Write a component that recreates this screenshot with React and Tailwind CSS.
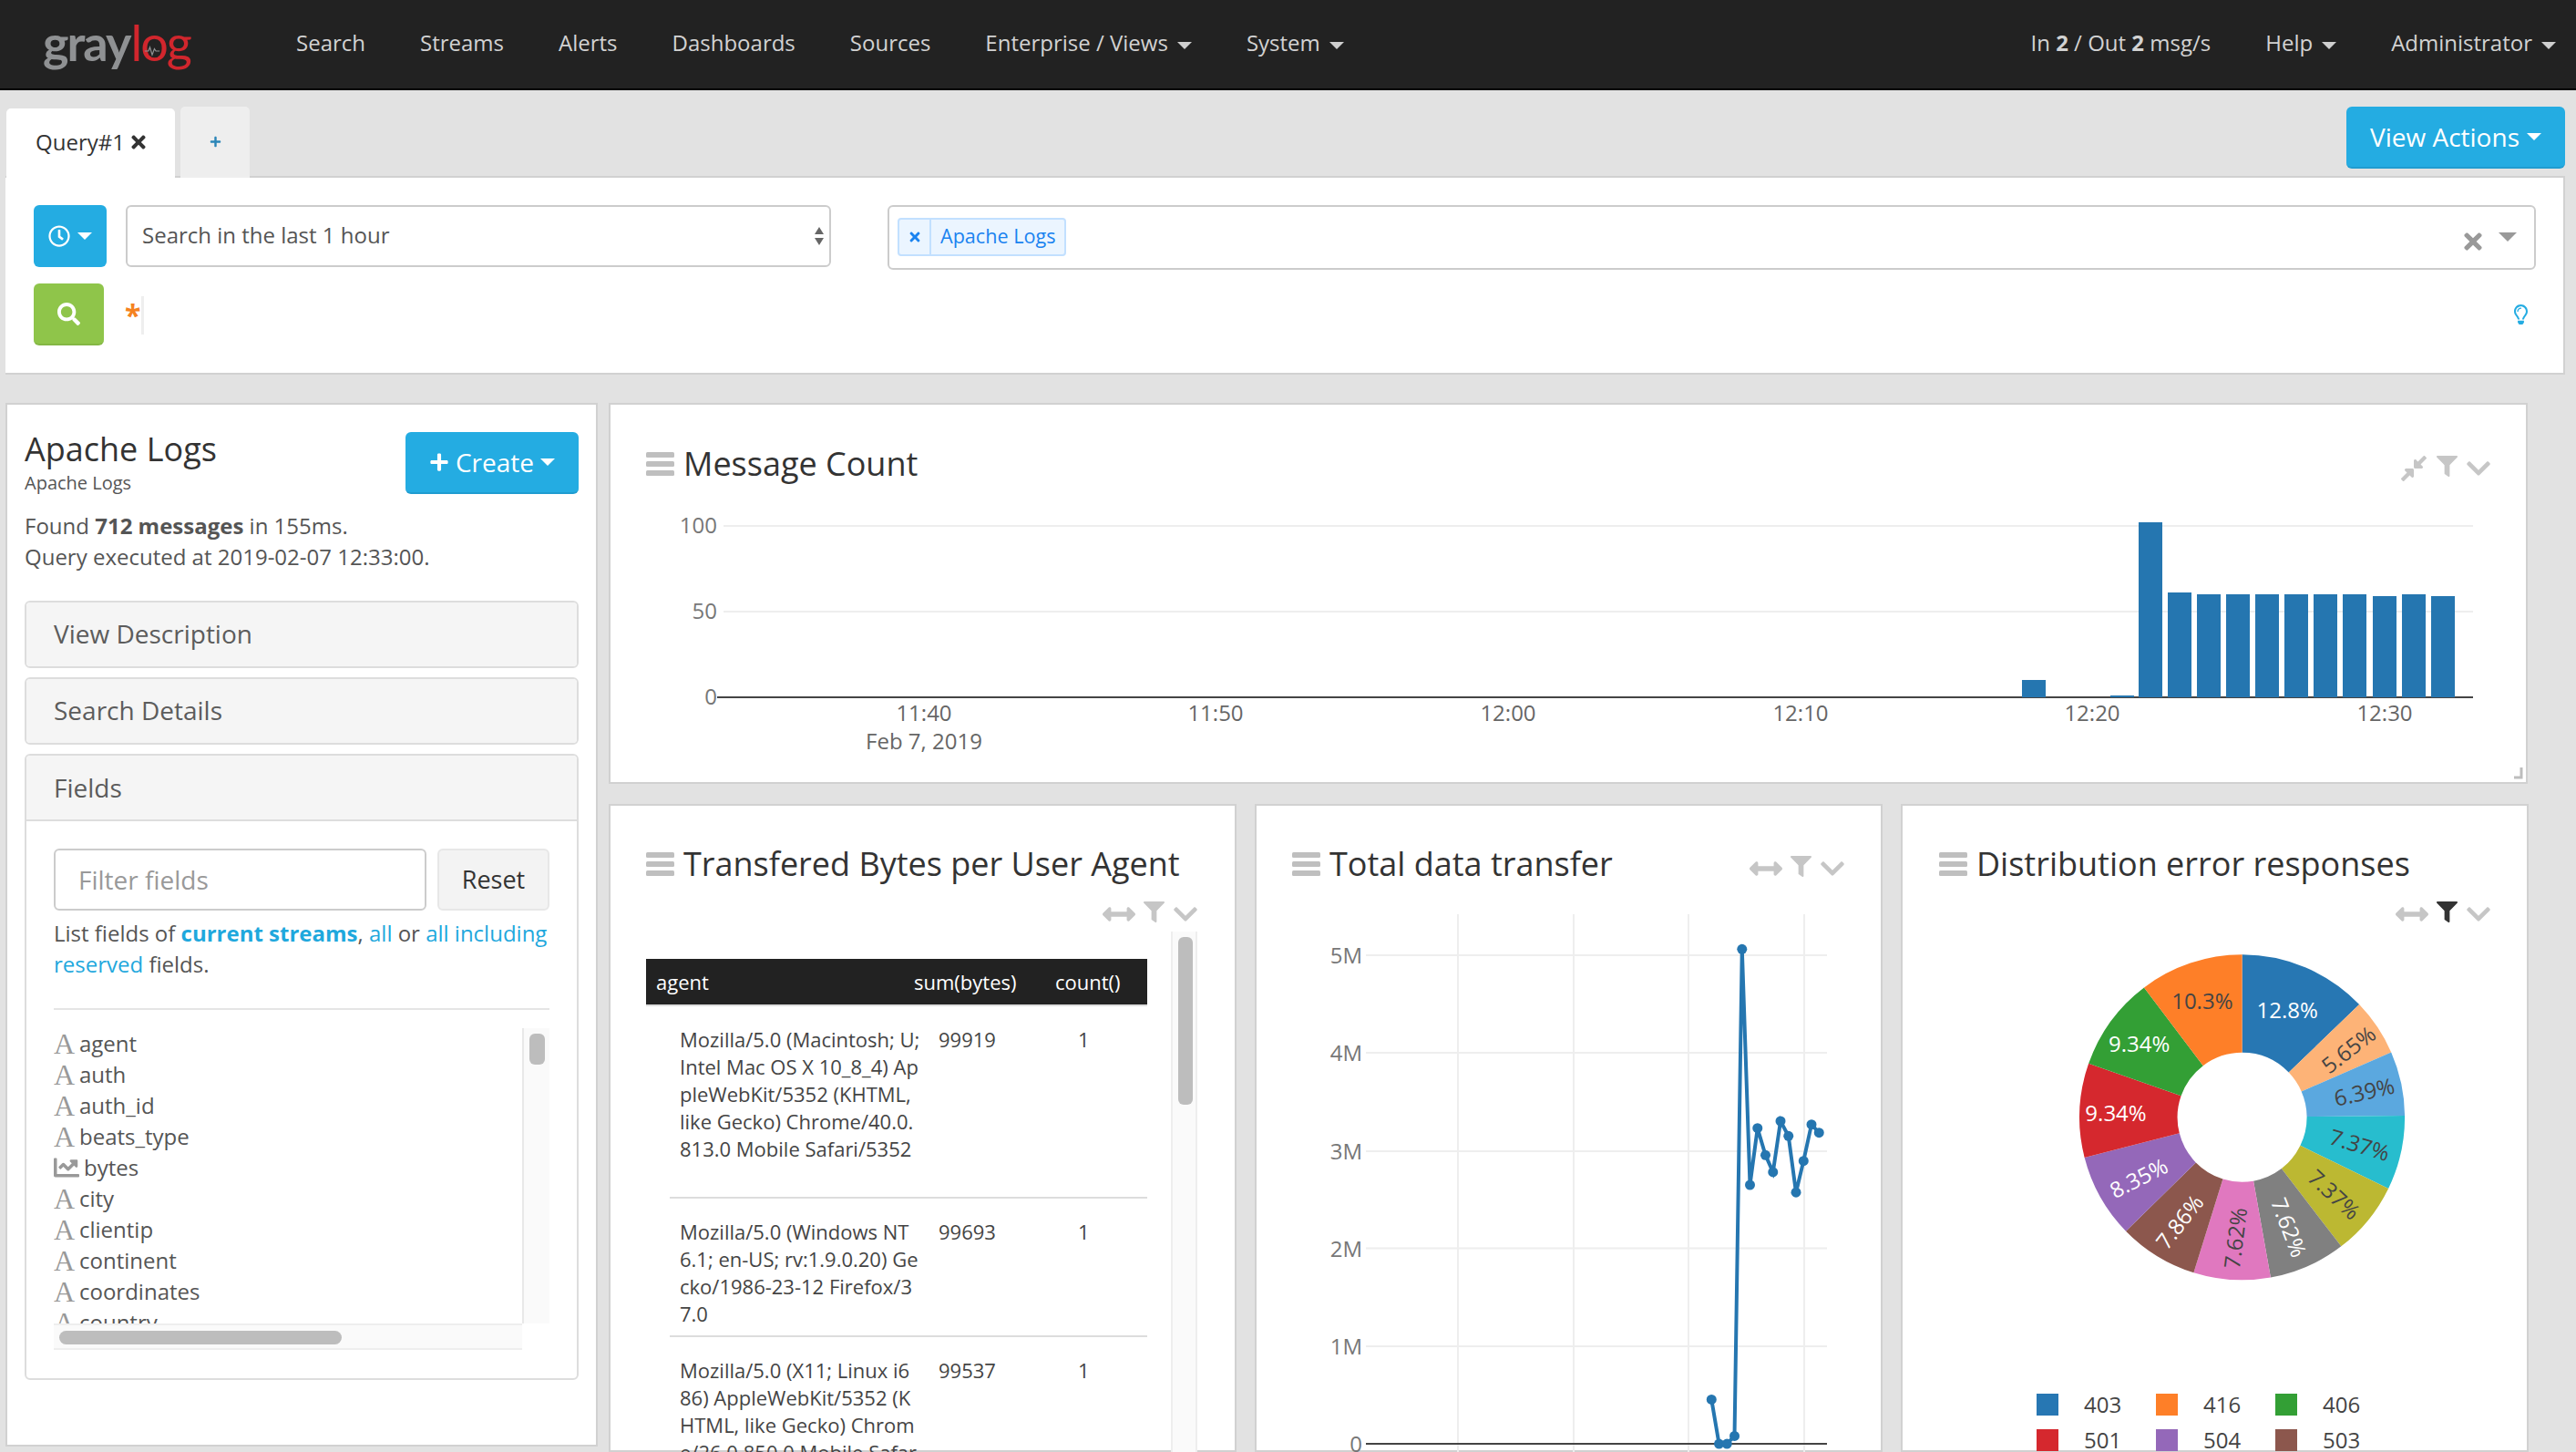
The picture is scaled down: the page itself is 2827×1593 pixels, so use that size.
import React from "react";
import { FaRegClock, FaSearch, FaTimes, FaPlus, FaFilter, FaChevronDown, FaArrowsAltH, FaCompressAlt, FaChartLine, FaRegLightbulb } from "react-icons/fa";

const OS = "font-['Open_Sans',sans-serif]";

function Caret({ color = "border-t-[#cfcfcf]" }) {
  return <span className={`inline-block w-0 h-0 border-x-transparent border-x-[8px] border-t-[8px] ${color}`} />;
}

function NavItem({ children, caret, className = "" }) {
  return (
    <span className={`flex items-center gap-[10px] ${className}`}>
      <span>{children}</span>
      {caret && <span className="flex mt-[5px]"><Caret /></span>}
    </span>
  );
}

function Logo() {
  return (
    <div className="relative flex items-baseline font-['Lato',sans-serif] text-[54px] leading-none tracking-[-2px] blur-[0.5px] w-[164px] ml-[47px] mt-[-3px]">
      <span className="font-bold text-[#8f9193]">gray</span>
      <span className="text-[#d1262d] ml-[1px]">log</span>
      <svg className="absolute left-[111px] top-[30px] w-[18px] h-[12px]" viewBox="0 0 22 14" fill="none" stroke="#8f9193" strokeWidth="1.5">
        <path d="M1 7h5l2-5 3 10 3-8 2 3h5" />
      </svg>
    </div>
  );
}

function Nav() {
  return (
    <nav className="h-[99px] shrink-0 bg-[#222222] border-b-2 border-black flex items-center text-[24px] text-[#d2d2d2]">
      <Logo />
      <div className="flex items-center gap-[60px] ml-[114px] mt-[-3px]">
        <NavItem>Search</NavItem>
        <NavItem>Streams</NavItem>
        <NavItem>Alerts</NavItem>
        <NavItem>Dashboards</NavItem>
        <NavItem>Sources</NavItem>
        <NavItem caret>Enterprise / Views</NavItem>
        <NavItem caret>System</NavItem>
      </div>
      <div className="ml-auto flex items-center mr-[22px] mt-[-3px]">
        <span className="mr-[60px]">In <b>2</b> / Out <b>2</b> msg/s</span>
        <NavItem caret className="mr-[60px]">Help</NavItem>
        <NavItem caret>Administrator</NavItem>
      </div>
    </nav>
  );
}

function QueryBar() {
  return (
    <div className="pl-[6px] pr-[12px]">
      <div className="flex items-end h-[94px] relative z-10">
        <div className="h-[76px] w-[185px] ml-[1px] bg-white rounded-t-[5px] flex items-center justify-center gap-[7px] text-[24px] text-[#333] mb-[-2px] pb-[2px]">
          <span>Query#1</span>
          <FaTimes className="text-[#333] w-[16px] h-[22px]" />
        </div>
        <div className="h-[78px] w-[76px] ml-[6px] bg-[#eeeeee] rounded-t-[5px] flex items-center justify-center mb-[-2px] pb-[2px]">
          <FaPlus className="text-[#2b86b8] w-[13px] h-[13px]" />
        </div>
        <button className="ml-auto mb-[8px] h-[68px] w-[240px] bg-[#24ace2] border-b-2 border-[#1f9cd0] rounded-[6px] text-white text-[28px] flex items-center justify-center gap-[8px]">
          View Actions <Caret color="border-t-white" />
        </button>
      </div>
      <div className="h-[218px] bg-white border-2 border-[#d1d1d1] border-l-0 pl-[31px] pr-[30px] pt-[30px]">
        <div className="flex items-start">
          <button className="w-[80px] h-[68px] bg-[#24ace2] rounded-[6px] flex items-center justify-center gap-[8px] text-white">
            <FaRegClock className="w-[24px] h-[24px]" />
            <Caret color="border-t-white" />
          </button>
          <div className="ml-[21px] w-[774px] h-[68px] border-2 border-[#cccccc] rounded-[6px] flex items-center pl-[16px] pr-[6px] text-[24px] text-[#555]">
            <span className="mt-[-2px]">Search in the last 1 hour</span>
            <span className="ml-auto flex flex-col gap-[4px]">
              <span className="block w-0 h-0 border-x-[5px] border-b-[8px] border-x-transparent border-b-[#666]" />
              <span className="block w-0 h-0 border-x-[5px] border-t-[8px] border-x-transparent border-t-[#666]" />
            </span>
          </div>
          <div className="ml-[62px] flex-1 h-[71px] border-2 border-[#cccccc] rounded-[6px] flex items-center pl-[9px] pr-[19px]">
            <div className="h-[42px] flex items-stretch border-2 border-[#c2e0ff] bg-[#ebf5ff] rounded-[4px] text-[#1a83f0] text-[21.6px] mt-[-2px]">
              <span className="w-[35px] flex items-center justify-center border-r-2 border-[#c2e0ff]"><FaTimes className="w-[12px] h-[16px] text-[#1a83f0]" /></span>
              <span className="pl-[10px] pr-[10px] flex items-center">Apache Logs</span>
            </div>
            <FaTimes className="ml-auto w-[20px] h-[28px] text-[#999] mt-[8px]" />
            <span className="ml-[18px] mt-[-2px] w-0 h-0 border-x-[10px] border-t-[10px] border-x-transparent border-t-[#999]" />
          </div>
        </div>
        <div className="flex items-start mt-[15px]">
          <button className="w-[77px] h-[68px] bg-[#8fc54a] border-b-2 border-[#84b744] rounded-[6px] flex items-center justify-center text-white">
            <FaSearch className="w-[25px] h-[25px]" />
          </button>
          <span className="ml-[23px] mt-[14px] h-[42px] border-r-[3px] border-[#eeeeee] pr-[2px] text-[#f58220] text-[32px] leading-[42px] font-bold w-[21px]">*</span>
          <FaRegLightbulb className="ml-auto mr-[9px] mt-[23px] w-[15px] h-[22px] text-[#24ace2]" />
        </div>
      </div>
    </div>
  );
}

function PanelHead({ children, open }) {
  return (
    <div className={`${open ? "h-[72px] border-b-2 border-[#dddddd]" : "h-[70px] pb-[2px]"} bg-[#f5f5f5] flex items-center pl-[30px] text-[28px] text-[#5c5c5c]`}>
      {children}
    </div>
  );
}

const fields = ["agent", "auth", "auth_id", "beats_type", "bytes", "city", "clientip", "continent", "coordinates", "country"];

function Sidebar() {
  return (
    <aside className="w-[650px] shrink-0 h-[1145px] bg-white border-2 border-[#d1d1d1] pl-[19px] pr-[19px] pt-[18px] text-[#555] text-[24px]">
      <div className="flex justify-between items-start">
        <div>
          <div className="text-[36px] leading-[50px] text-[#333] mt-[6px]">Apache Logs</div>
          <div className="text-[20px] leading-[24px] text-[#555]">Apache Logs</div>
        </div>
        <button className="mt-[12px] w-[190px] h-[68px] bg-[#24ace2] border-b-2 border-[#1f9cd0] rounded-[6px] text-white text-[28px] flex items-center justify-center gap-[7px]">
          <FaPlus className="w-[22px] h-[22px]" /> Create <Caret color="border-t-white" />
        </button>
      </div>
      <div className="mt-[18px] leading-[34px]">
        <div>Found <b>712 messages</b> in 155ms.</div>
        <div>Query executed at 2019-02-07 12:33:00.</div>
      </div>
      <div className="mt-[31px] border-2 border-[#dddddd] rounded-[6px] overflow-hidden"><PanelHead>View Description</PanelHead></div>
      <div className="mt-[10px] border-2 border-[#dddddd] rounded-[6px] overflow-hidden"><PanelHead>Search Details</PanelHead></div>
      <div className="mt-[10px] border-2 border-[#dddddd] rounded-[6px] overflow-hidden h-[687px]">
        <PanelHead open>Fields</PanelHead>
        <div className="pl-[30px] pr-[30px] pt-[30px]">
          <div className="flex gap-[12px]">
            <div className="w-[409px] h-[68px] border-2 border-[#cccccc] rounded-[6px] flex items-center pl-[25px] text-[28px] text-[#999]">Filter fields</div>
            <button className="flex-1 h-[68px] bg-[#f3f3f3] border-2 border-[#e7e7e7] rounded-[6px] text-[27px] text-[#333]">Reset</button>
          </div>
          <p className="mt-[8px] leading-[34px] whitespace-nowrap text-[#555]">
            List fields of <b className="font-bold text-[#1fa8dd]">current streams</b>, <span className="text-[#1fa8dd]">all</span> or <span className="text-[#1fa8dd]">all including</span><br />
            <span className="text-[#1fa8dd]">reserved</span> fields.
          </p>
          <div className="mt-[31px] border-t-2 border-[#e5e5e5]" />
          <div className="mt-[20px] relative h-[353px]">
            <div className="flex h-[324px]">
              <div className="flex-1 overflow-hidden">
                {fields.map((f) => (
                  <div key={f} className="h-[34px] flex items-center">
                    {f === "bytes" ? (
                      <FaChartLine className="w-[28px] h-[28px] my-[-2px] text-[#999] mr-[5px]" />
                    ) : (
                      <span className="font-['Liberation_Serif',serif] text-[#999] text-[32px] leading-none w-[23px] mr-[5px]">A</span>
                    )}
                    <span>{f}</span>
                  </div>
                ))}
              </div>
              <div className="w-[30px] bg-[#fafafa] border-l-2 border-[#e8e8e8] pl-[6px] pt-[6px]">
                <div className="w-[17px] h-[34px] bg-[#bdbdbd] rounded-[6px]" />
              </div>
            </div>
            <div className="w-[514px] h-[29px] bg-[#fafafa] border-y-2 border-[#eeeeee] pl-[6px] pt-[6px]">
              <div className="w-[310px] h-[15px] bg-[#bdbdbd] rounded-[8px]" />
            </div>
          </div>
        </div>
      </div>
    </aside>
  );
}

function Bars() {
  return (
    <svg width="31" height="26" viewBox="0 0 31 26" className="shrink-0">
      <rect x="0" y="0" width="31" height="6" rx="1.5" fill="#bfbfbf" />
      <rect x="0" y="10" width="31" height="6" rx="1.5" fill="#bfbfbf" />
      <rect x="0" y="20" width="31" height="6" rx="1.5" fill="#bfbfbf" />
    </svg>
  );
}

function Controls({ first = "h", filterDark }) {
  return (
    <div className="flex items-center h-[28px] text-[#c6c6c6]">
      {first === "h" ? <FaArrowsAltH className="w-[36px] h-[36px] my-[-4px]" /> : <FaCompressAlt className="w-[32px] h-[32px] my-[-2px]" />}
      <FaFilter className={`w-[23px] h-[23px] ml-[9px] mt-[-6px] ${filterDark ? "text-[#333]" : ""}`} />
      <span className="w-[26px] h-[28px] ml-[10px] flex items-center justify-center">
        <FaChevronDown className="w-[30px] h-[30px] shrink-0" />
      </span>
    </div>
  );
}

function Title({ children }) {
  return (
    <div className="flex items-center gap-[10px]">
      <Bars />
      <h2 className="text-[36px] leading-[50px] font-normal text-[#333] whitespace-nowrap">{children}</h2>
    </div>
  );
}

const barData = [[2219, 746], [2316, 763], [2347, 573], [2379, 650], [2411, 652], [2443, 652], [2475, 652], [2507, 652], [2539, 652], [2571, 652], [2604, 654], [2636, 652], [2668, 654]];

function MessageCount() {
  const xs = [1014, 1334, 1655, 1976, 2296, 2617];
  const labels = ["11:40", "11:50", "12:00", "12:10", "12:20", "12:30"];
  return (
    <section className="h-[418px] w-[2106px] bg-white border-2 border-[#d1d1d1] relative">
      <div className="flex items-center justify-between pl-[39px] pr-[39px] pt-[40px]">
        <Title>Message Count</Title>
        <div className="mt-[10px]"><Controls first="c" /></div>
      </div>
      <svg className="absolute left-[-2px] top-[-2px]" width="2106" height="418" viewBox="668 442 2106 418" fontFamily="'Open Sans',sans-serif" fontSize="24">
        <path d="M794 577H2714M794 671H2714" stroke="#eeeeee" strokeWidth="2" />
        <path d="M787 765H2714" stroke="#444444" strokeWidth="2" />
        {barData.map(([x, y]) => <rect key={x} x={x} y={y} width="26" height={765 - y} fill="#2576b0" />)}
        <g fill="#777777" textAnchor="end">
          <text x="787" y="585">100</text>
          <text x="787" y="679">50</text>
          <text x="787" y="773">0</text>
        </g>
        <g fill="#666666" textAnchor="middle">
          {xs.map((x, i) => <text key={x} x={x} y="791">{labels[i]}</text>)}
          <text x="1014" y="822">Feb 7, 2019</text>
        </g>
        <path d="M2767 842v11h-8" fill="none" stroke="#bdbdbd" strokeWidth="3" />
      </svg>
    </section>
  );
}

const rows = [
  { lines: ["Mozilla/5.0 (Macintosh; U;", "Intel Mac OS X 10_8_4) Ap", "pleWebKit/5352 (KHTML,", "like Gecko) Chrome/40.0.", "813.0 Mobile Safari/5352"], sum: "99919", h: "h-[211px]" },
  { lines: ["Mozilla/5.0 (Windows NT", "6.1; en-US; rv:1.9.0.20) Ge", "cko/1986-23-12 Firefox/3", "7.0"], sum: "99693", h: "h-[152px]" },
  { lines: ["Mozilla/5.0 (X11; Linux i6", "86) AppleWebKit/5352 (K", "HTML, like Gecko) Chrom", "e/26.0.850.0 Mobile Safar"], sum: "99537", h: "h-[152px]" },
];

function BytesTable() {
  return (
    <div className="flex mt-[5px]">
      <div className="w-[550px] pt-[30px]">
        <div className="h-[52px] bg-[#222222] border-b-2 border-[#dddddd] text-white text-[22px] font-medium relative flex items-center">
          <span className="ml-[11px]">agent</span>
          <span className="absolute left-[294px]">sum(bytes)</span>
          <span className="absolute left-[449px]">count()</span>
        </div>
        <div className="ml-[26px] text-[22px] leading-[30px] text-[#444]">
          {rows.map((r, i) => (
            <div key={r.sum} className={`${r.h} flex pt-[21px] ${i < 2 ? "border-b-2 border-[#dddddd]" : ""}`}>
              <div className="w-[295px] pl-[11px] whitespace-nowrap">{r.lines.map((l) => <div key={l}>{l}</div>)}</div>
              <div className="w-[153px]">{r.sum}</div>
              <div>1</div>
            </div>
          ))}
        </div>
      </div>
      <div className="ml-[26px] w-[29px] h-[600px] bg-[#fafafa] border-x-2 border-[#eeeeee] pl-[6px] pt-[6px]">
        <div className="w-[16px] h-[184px] bg-[#bdbdbd] rounded-[6px]" />
      </div>
    </div>
  );
}

const pts = [[1107, 1442], [1125, 1549], [1144, 1549], [1162, 1530], [1180, 355], [1199, 924], [1217, 787], [1236, 852], [1254, 893], [1272, 770], [1291, 806], [1309, 942], [1327, 866], [1346, 778], [1364, 798]]
  .map(([x, y]) => [1370 + x / 2.178, 880 + y / 2.2]);

function LineChart() {
  const ys = [[1048, "5M"], [1155, "4M"], [1263, "3M"], [1369.5, "2M"], [1477, "1M"]];
  return (
    <svg className="absolute left-[-2px] top-[-2px]" width="689" height="711" viewBox="1377 882 689 711" fontFamily="'Open Sans',sans-serif" fontSize="24">
      {[1600, 1727, 1853, 1980].map((x) => <path key={x} d={`M${x} 1003V1593`} stroke="#eeeeee" strokeWidth="2" />)}
      {ys.map(([y, l]) => (
        <g key={l}>
          <path d={`M1499 ${y}H2005`} stroke="#eeeeee" strokeWidth="2" />
          <text x="1495" y={y + 9} textAnchor="end" fill="#777777">{l}</text>
        </g>
      ))}
      <text x="1495" y="1593" textAnchor="end" fill="#777777">0</text>
      <path d="M1499 1584H2005" stroke="#444444" strokeWidth="2" />
      <polyline points={pts.map((p) => p.join(",")).join(" ")} fill="none" stroke="#2576b0" strokeWidth="4" />
      {pts.map(([x, y]) => <circle key={x} cx={x} cy={y} r="5.5" fill="#2576b0" />)}
    </svg>
  );
}

const slices = [
  [12.8, "#2777b3"], [5.65, "#fdb377"], [6.39, "#5ba8df"], [7.37, "#27bdce"], [7.37, "#bcb832"], [7.62, "#808080"],
  [7.62, "#e078bf"], [7.86, "#8c574d"], [8.35, "#9468b9"], [9.34, "#d5282e"], [9.34, "#339f35"], [10.3, "#fe7f28"],
];
const pieLabels = [
  ["12.8%", 903, 500, 0, "#fff"], ["5.65%", 1043, 596, -38, "#444"], ["6.39%", 1080, 698, -13, "#444"],
  ["7.37%", 1070, 826, 17, "#444"], ["7.37%", 1012, 946, 43, "#444"], ["7.62%", 908, 1026, 69, "#fff"],
  ["7.62%", 782, 1052, -83, "#444"], ["7.86%", 654, 1012, -52, "#fff"], ["8.35%", 560, 906, -27, "#fff"],
  ["9.34%", 508, 748, 0, "#fff"], ["9.34%", 562, 582, 0, "#fff"], ["10.3%", 707, 478, 0, "#444"],
];

function Pie() {
  const cx = 2460.6, cy = 1225.8, R = 178.5, r = 71;
  const total = slices.reduce((a, s) => a + s[0], 0);
  let acc = 0;
  const pt = (a, rad) => `${cx + rad * Math.sin(a)} ${cy - rad * Math.cos(a)}`;
  return (
    <svg className="absolute left-[-2px] top-[-2px]" width="689" height="711" viewBox="2086 882 689 711" fontFamily="'Open Sans',sans-serif" fontSize="24">
      {slices.map(([v, c]) => {
        const a0 = (acc / total) * Math.PI * 2;
        acc += v;
        const a1 = (acc / total) * Math.PI * 2;
        const large = a1 - a0 > Math.PI ? 1 : 0;
        return <path key={c} d={`M${pt(a0, r)}A${r} ${r} 0 ${large} 1 ${pt(a1, r)}L${pt(a1, R)}A${R} ${R} 0 ${large} 0 ${pt(a0, R)}Z`} fill={c} />;
      })}
      {pieLabels.map(([t, x, y, rot, fill], i) => {
        const px = 2080 + x / 2.099, py = 880 + y / 2.2;
        return <text key={i} x={px} y={py} textAnchor="middle" dominantBaseline="central" fill={fill} transform={`rotate(${rot} ${px} ${py})`}>{t}</text>;
      })}
    </svg>
  );
}

function Legend() {
  const items = [["403", "#2777b3"], ["416", "#fe7f28"], ["406", "#339f35"], ["501", "#d5282e"], ["504", "#9468b9"], ["503", "#8c574d"]];
  return (
    <div className="absolute left-[147px] top-[645px] grid grid-cols-[131px_131px_131px] gap-y-[15px] text-[24px] text-[#444]">
      {items.map(([l, c]) => (
        <div key={l} className="flex items-center h-[24px]">
          <span className="w-[24px] h-[24px] mr-[28px]" style={{ background: c }} />
          <span>{l}</span>
        </div>
      ))}
    </div>
  );
}

function Dashboard() {
  return (
    <div className="flex flex-col gap-[22px]">
      <MessageCount />
      <div className="flex gap-[20px]">
        <section className="h-[711px] w-[689px] bg-white border-2 border-[#d1d1d1] pl-[39px] pr-[41px] pt-[39px]">
          <Title>Transfered Bytes per User Agent</Title>
          <div className="flex justify-end mt-[16px] h-[28px]"><Controls /></div>
          <BytesTable />
        </section>
        <section className="h-[711px] w-[689px] bg-white border-2 border-[#d1d1d1] pl-[39px] pr-[40px] pt-[39px] relative">
          <LineChart />
          <div className="flex items-center justify-between relative">
            <Title>Total data transfer</Title>
            <div className="mt-[10px]"><Controls /></div>
          </div>
        </section>
        <section className="h-[711px] w-[689px] bg-white border-2 border-[#d1d1d1] pl-[40px] pr-[40px] pt-[39px] relative">
          <Pie />
          <div className="relative">
            <Title>Distribution error responses</Title>
            <div className="flex justify-end mt-[16px]"><Controls filterDark /></div>
          </div>
          <Legend />
        </section>
      </div>
    </div>
  );
}

export default function App() {
  return (
    <div className={`h-[1593px] w-[2827px] overflow-hidden bg-[#e2e2e2] flex flex-col ${OS}`}>
      <Nav />
      <QueryBar />
      <div className="flex gap-[12px] pl-[6px] mt-[31px]">
        <Sidebar />
        <Dashboard />
      </div>
    </div>
  );
}
